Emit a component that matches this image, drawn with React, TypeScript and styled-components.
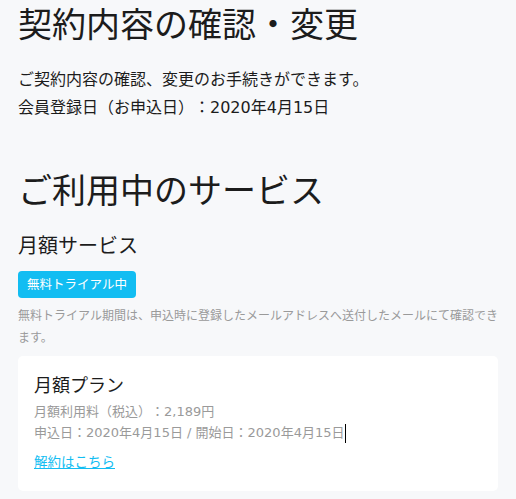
import React from 'react';
import styled, { createGlobalStyle } from 'styled-components';

const GlobalStyle = createGlobalStyle`
  html, body {
    margin: 0;
    padding: 0;
    background: #f7f8fa;
  }
  body {
    font-family: 'DejaVu Sans', 'Noto Sans CJK JP', sans-serif;
    color: #1c1c1c;
    text-spacing-trim: space-all;
  }
  * {
    box-sizing: border-box;
  }
`;

const plan = {
  name: '月額プラン',
  price: '月額利用料（税込）：2,189円',
  dates: '申込日：2020年4月15日 / 開始日：2020年4月15日',
};

const App = () => {
  return (
    <Page>
      <GlobalStyle />
      <PageTitle>契約内容の確認・変更</PageTitle>
      <Lead>
        ご契約内容の確認、変更のお手続きができます。
        <br />
        会員登録日（お申込日）：2020年4月15日
      </Lead>

      <SectionTitle>ご利用中のサービス</SectionTitle>
      <ServiceName>月額サービス</ServiceName>
      <Badge>無料トライアル中</Badge>
      <Note>
        無料トライアル期間は、申込時に登録したメールアドレスへ送付したメールにて確認できます。
      </Note>

      <PlanCard>
        <PlanName>{plan.name}</PlanName>
        <PlanInfo>
          {plan.price}
          <br />
          {plan.dates}
          <Caret />
        </PlanInfo>
        <CancelLink href="#">解約はこちら</CancelLink>
      </PlanCard>
    </Page>
  );
};

export default App;

const Page = styled.div`
  display: flex;
  flex-direction: column;
  align-items: flex-start;
  padding: 5px 18px 8px;
  min-height: 499px;
`;

const PageTitle = styled.h1`
  margin: 0;
  font-size: 34px;
  font-weight: 400;
  line-height: 41px;
`;

const Lead = styled.p`
  margin: 20px 0 0;
  font-size: 16px;
  line-height: 28px;
`;

const SectionTitle = styled.h2`
  margin: 49px 0 0;
  font-size: 34px;
  font-weight: 400;
  line-height: 41px;
`;

const ServiceName = styled.h3`
  margin: 19px 0 0;
  font-size: 20px;
  font-weight: 400;
  line-height: 30px;
`;

const Badge = styled.span`
  display: inline-block;
  margin-top: 10px;
  height: 27px;
  padding: 0 9px;
  border-radius: 4px;
  background: #12bdf2;
  color: #fff;
  font-size: 12.5px;
  line-height: 27px;
`;

const Note = styled.p`
  margin: 7px 0 0;
  font-size: 12px;
  line-height: 22px;
  color: #9a9a9a;
`;

const PlanCard = styled.div`
  align-self: stretch;
  margin-top: 7px;
  padding: 16px 16px 18px;
  background: #fff;
  border-radius: 5px;
  display: flex;
  flex-direction: column;
  align-items: flex-start;
`;

const PlanName = styled.div`
  font-size: 18px;
  line-height: 27px;
`;

const PlanInfo = styled.p`
  margin: 2px 0 0;
  font-size: 13px;
  line-height: 21px;
  color: #9a9a9a;
`;

const Caret = styled.span`
  display: inline-block;
  width: 1px;
  height: 19px;
  margin-left: 1px;
  background: #000;
  vertical-align: middle;
`;

const CancelLink = styled.a`
  margin-top: 9px;
  font-size: 13.5px;
  line-height: 21px;
  color: #12bdf2;
  text-decoration: underline;
`;
